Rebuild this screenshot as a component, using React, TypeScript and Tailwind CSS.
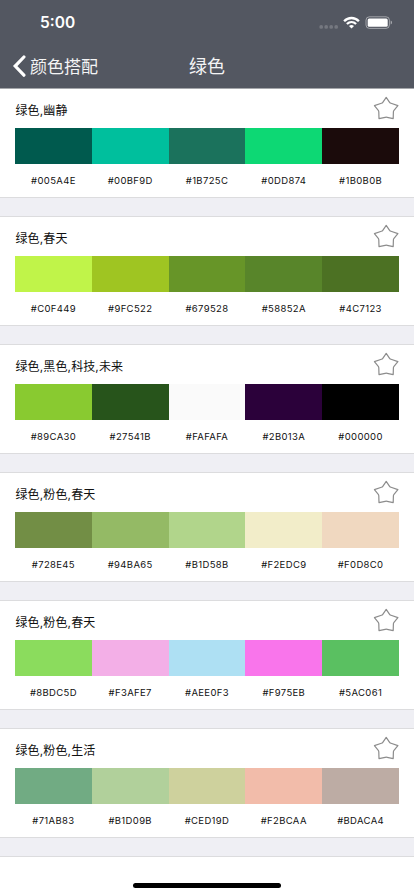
import React from 'react';

interface Palette {
  title: string;
  colors: string[];
}

const palettes: Palette[] = [
  { title: '绿色,幽静', colors: ['#005A4E', '#00BF9D', '#1B725C', '#0DD874', '#1B0B0B'] },
  { title: '绿色,春天', colors: ['#C0F449', '#9FC522', '#679528', '#58852A', '#4C7123'] },
  { title: '绿色,黑色,科技,未来', colors: ['#89CA30', '#27541B', '#FAFAFA', '#2B013A', '#000000'] },
  { title: '绿色,粉色,春天', colors: ['#728E45', '#94BA65', '#B1D58B', '#F2EDC9', '#F0D8C0'] },
  { title: '绿色,粉色,春天', colors: ['#8BDC5D', '#F3AFE7', '#AEE0F3', '#F975EB', '#5AC061'] },
  { title: '绿色,粉色,生活', colors: ['#71AB83', '#B1D09B', '#CED19D', '#F2BCAA', '#BDACA4'] },
];

const StarIcon = () => (
  <svg className="w-[26px] h-[26px]" viewBox="0 0 26 26" fill="none" stroke="#8c8c8c" strokeWidth="1.2" strokeLinejoin="round">
    <path d="M13.2 2.4 L16.6 7.3 Q17.1 8 18 8.3 L24.9 10.6 L21 15.3 Q20.4 16 20.4 17 L20.2 23.6 L14.2 22.3 Q13.2 22.1 12.2 22.3 L6 23.7 L5.8 17 Q5.8 16 5.3 15.3 L1.4 10.6 L8.4 8.3 Q9.3 8 9.8 7.3 Z" />
  </svg>
);

const StatusIcons = () => (
  <div className="flex items-center">
    <svg className="w-[20px] h-[14px]" viewBox="0 0 20 14" fill="#fff" fillOpacity="0.2">
      <circle cx="2.2" cy="10.9" r="1.9" />
      <circle cx="7.2" cy="10.9" r="1.9" />
      <circle cx="12.2" cy="10.9" r="1.9" />
      <circle cx="17.2" cy="10.9" r="1.9" />
    </svg>
    <svg className="ml-1 w-[17px] h-[13px]" viewBox="0 0 17 13" fill="none" stroke="#fff" strokeWidth="2.3">
      <path d="M1.1 5.2 C5.2 0.9 11.8 0.9 15.9 5.2" />
      <path d="M3.9 8 C6.6 5.4 10.4 5.4 13.1 8" />
      <path d="M8.5 12.6 L6 10.1 Q8.5 8.1 11 10.1 Z" fill="#fff" stroke="none" />
    </svg>
    <svg className="ml-[5px] w-[28px] h-[13px]" viewBox="0 0 28 13" fill="none">
      <rect x="1" y="0.8" width="23.4" height="11.6" rx="3.4" stroke="#fff" strokeOpacity="0.45" />
      <rect x="2.7" y="2.4" width="20" height="8.4" rx="1.5" fill="#fff" />
      <path d="M25.7 4.6 Q27 5.2 27 6.6 Q27 8 25.7 8.6 Z" fill="#fff" fillOpacity="0.5" />
    </svg>
  </div>
);

const PaletteCard = ({ title, colors }: Palette) => (
  <section className="h-[110px] bg-white border-y border-[#dcdcde] first:border-t-[#a4a6aa] px-[15px]">
    <div className="h-[39px] flex items-start justify-between">
      <h2 className="pt-[13px] pl-[0.5px] text-[12px] leading-[18px] tracking-[0.12px] text-[#111]">{title}</h2>
      <button className="mt-[6px]">
        <StarIcon />
      </button>
    </div>
    <div className="flex h-9">
      {colors.map((color) => (
        <div key={color} className="flex-1" style={{ backgroundColor: color }} />
      ))}
    </div>
    <div className="flex pt-[10px]">
      {colors.map((color) => (
        <span key={color} className="flex-1 text-center text-[9.5px] leading-[14px] tracking-[0.35px] text-[#111]">
          {color}
        </span>
      ))}
    </div>
  </section>
);

function App() {
  return (
    <div className="relative w-full h-[896px] overflow-hidden bg-[#efeff4] font-['Inter','Noto_Sans_CJK_SC',sans-serif]">
      <header className="h-[88px] bg-[#535761] text-white">
        {/* Status bar */}
        <div className="h-11 pl-10 pr-[21px] pt-px flex items-center justify-between">
          <span className="pt-px text-[15.5px] font-semibold leading-5">5:00</span>
          <StatusIcons />
        </div>

        {/* Navigation bar */}
        <div className="h-11 pl-3 pr-3 grid grid-cols-[1fr_auto_1fr] items-center text-[17px] leading-6 text-[#f4f4f5]">
          <button className="flex items-center">
            <svg className="w-[14px] h-[22px] mr-1" viewBox="0 0 14 22" fill="none" stroke="#fff" strokeWidth="3.2" strokeLinecap="round" strokeLinejoin="miter">
              <path d="M11.9 2 L3.2 11.1 L11.9 20.2" />
            </svg>
            <span className="pt-px">颜色搭配</span>
          </button>
          <h1 className="pt-px text-[18px]">绿色</h1>
        </div>
      </header>

      <main className="flex flex-col gap-[18px]">
        {palettes.map((palette, index) => (
          <PaletteCard key={index} {...palette} />
        ))}
        <section className="h-[110px] bg-white border-t border-[#dcdcde]" />
      </main>

      {/* Home indicator */}
      <div className="absolute bottom-[8px] left-[133px] w-[148px] h-[5px] rounded-full bg-black" />
    </div>
  );
}

export default App;
